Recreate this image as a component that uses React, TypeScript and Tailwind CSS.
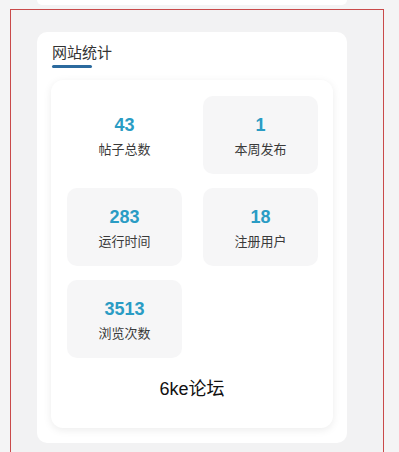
const STATS = [
  { value: "43", label: "帖子总数", plain: true },
  { value: "1", label: "本周发布" },
  { value: "283", label: "运行时间" },
  { value: "18", label: "注册用户" },
  { value: "3513", label: "浏览次数" },
]

function StatTile({ value, label, plain }: { value: string; label: string; plain?: boolean }) {
  return (
    <div
      className={
        "flex h-[78px] flex-col items-center justify-center rounded-[10px] pt-[3px] " +
        (plain ? "bg-white" : "bg-[#f6f6f7]")
      }
    >
      <div className="text-[18px] font-bold leading-[22px] text-[#2a9cc4]">{value}</div>
      <div className="mt-[5px] text-[13px] leading-[18px] text-[#3a3a3a]">{label}</div>
    </div>
  )
}

export default function App() {
  return (
    <div
      className="h-[452px] w-full overflow-hidden bg-[#f4f4f5]"
      style={{ fontFamily: '"Liberation Sans", "Noto Sans CJK SC", sans-serif' }}
    >
      {/* ── previous card (cut off) ─────────────────────────────────────── */}
      <div className="ml-[37px] h-[5px] w-[310px] rounded-b-[10px] bg-white" />

      {/* ── selected block ──────────────────────────────────────────────── */}
      <div className="ml-[10px] mt-[4px] h-[470px] w-[374px] border border-[#c94a4a] bg-[#f2f2f3] pl-[26px] pt-[22px]">
        <div className="w-[310px] rounded-[10px] bg-white px-[14px] pb-[15px] pt-[10px]">
          <div className="pl-[1px]">
            <div className="text-[15px] leading-[22px] text-[#333]">网站统计</div>
            <div className="mt-[1px] h-[3px] w-[40px] rounded-full bg-[#2b6a9e]" />
          </div>

          <div className="mt-[12px] rounded-[12px] bg-white px-[16px] pb-[27px] pt-[16px] shadow-[0_2px_8px_rgba(0,0,0,0.08)]">
            <div className="grid grid-cols-[115px_115px] gap-x-[21px] gap-y-[14px]">
              {STATS.map((s) => (
                <StatTile key={s.label} value={s.value} label={s.label} plain={s.plain} />
              ))}
            </div>
            <div className="mt-[19px] text-center text-[18px] leading-[24px] text-[#111]">6ke论坛</div>
          </div>
        </div>
      </div>
    </div>
  )
}
